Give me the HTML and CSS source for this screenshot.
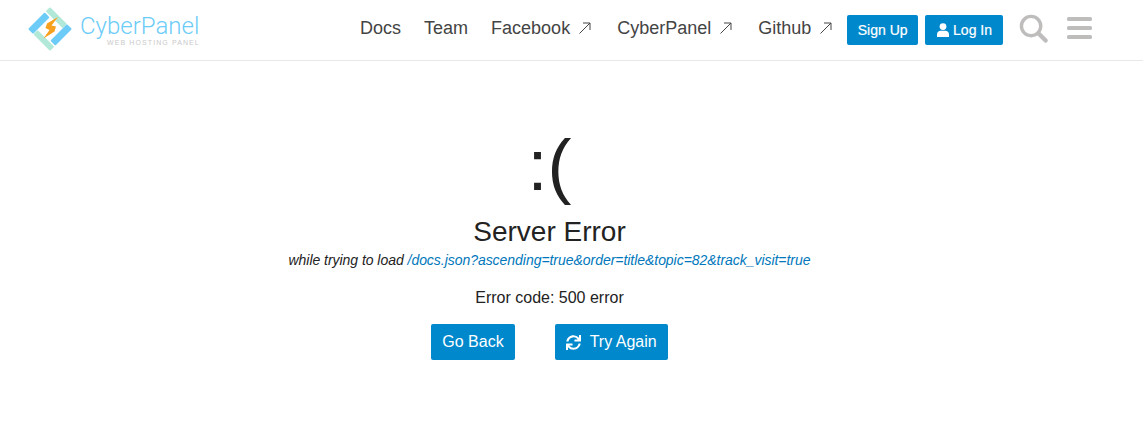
FILE: index.html
```html
<!DOCTYPE html>
<html lang="en">
<head>
<meta charset="utf-8">
<title>Server Error</title>
<link rel="stylesheet" href="styles.css">
</head>
<body>
<header class="site-header">
  <a class="brand" href="#">
    <svg class="brand-mark" width="44" height="44" viewBox="-22 -22 44 44" aria-hidden="true">
      <g transform="rotate(45)">
        <rect x="-15.500" y="-15.500" width="24" height="6" rx="1" fill="#b2e8d8"/>
        <rect x="-8" y="9.500" width="23.500" height="6" rx="1" fill="#b2e8d8"/>
        <rect x="-15.500" y="-8" width="7" height="23.500" rx="1" fill="#6cccf7"/>
        <rect x="8.500" y="-15.500" width="7" height="23.500" rx="1" fill="#6cccf7"/>
      </g>
      <path d="M8 -12 L-3 -5.500 L-4.500 -1 L-0.500 1 L-6.500 9.500 L4.500 2.500 L6 -2.500 L1.500 -3.500 Z" fill="#f7a01d"/>
    </svg>
    <span class="brand-text">
      <span class="brand-name">CyberPanel</span>
      <span class="brand-tag">WEB HOSTING PANEL</span>
    </span>
  </a>
  <nav class="nav">
    <a class="nav-link" href="#">Docs</a>
    <a class="nav-link" href="#">Team</a>
    <a class="nav-link" href="#">Facebook<svg class="arrow" width="12" height="12" viewBox="0 0 12 12" aria-hidden="true"><path d="M0.500 11.500 L11 1 M4 1 H11 V8" fill="none" stroke="#444" stroke-width="1"/></svg></a>
    <a class="nav-link" href="#">CyberPanel<svg class="arrow" width="12" height="12" viewBox="0 0 12 12" aria-hidden="true"><path d="M0.500 11.500 L11 1 M4 1 H11 V8" fill="none" stroke="#444" stroke-width="1"/></svg></a>
    <a class="nav-link" href="#">Github<svg class="arrow" width="12" height="12" viewBox="0 0 12 12" aria-hidden="true"><path d="M0.500 11.500 L11 1 M4 1 H11 V8" fill="none" stroke="#444" stroke-width="1"/></svg></a>
  </nav>
  <div class="actions">
    <a class="btn btn-small" href="#">Sign Up</a>
    <a class="btn btn-small btn-login" href="#">
      <svg class="user-icon" width="12" height="14" viewBox="0 0 12 14" aria-hidden="true"><circle cx="6" cy="3.600" r="3.400" fill="#fff"/><path d="M0 14 V11.500 C0 9 1.800 7.800 3.500 7.800 H8.500 C10.200 7.800 12 9 12 11.500 V14 Z" fill="#fff"/></svg>
      Log In
    </a>
  </div>
  <div class="tools">
    <svg width="29" height="29" viewBox="0 0 30 30" aria-hidden="true"><circle cx="12.500" cy="12.500" r="10" fill="none" stroke="#bfbcbc" stroke-width="3.500"/><path d="M20 20 L27.500 27.500" stroke="#bfbcbc" stroke-width="4.500" stroke-linecap="round"/></svg>
    <svg width="25" height="22" viewBox="0 0 25 22" aria-hidden="true"><g fill="#bfbcbc"><rect width="25" height="4" rx="1.500"/><rect y="9" width="25" height="4" rx="1.500"/><rect y="18" width="25" height="4" rx="1.500"/></g></svg>
  </div>
</header>
<main class="wrap">
  <div class="face">:(</div>
  <h1 class="title">Server Error</h1>
  <p class="detail"><em>while trying to load <a href="#">/docs.json?ascending=true&amp;order=title&amp;topic=82&amp;track_visit=true</a></em></p>
  <p class="code">Error code: 500 error</p>
  <div class="buttons">
    <a class="btn btn-large" href="#">Go Back</a>
    <a class="btn btn-large" href="#">
      <svg width="15" height="15" viewBox="0 0 512 512" aria-hidden="true"><path fill="#fff" d="M440.650 12.570l4 82.770A247.160 247.160 0 0 0 255.830 8C134.730 8 33.910 94.920 12.290 209.820A12 12 0 0 0 24.090 224h49.050a12 12 0 0 0 11.670-9.260 175.910 175.910 0 0 1 317-56.940l-101.460-4.860a12 12 0 0 0-12.570 12v47.410a12 12 0 0 0 12 12H500a12 12 0 0 0 12-12V12a12 12 0 0 0-12-12h-47.370a12 12 0 0 0-11.980 12.570zM255.830 432a175.610 175.610 0 0 1-146-77.800l101.800 4.870a12 12 0 0 0 12.570-12v-47.400a12 12 0 0 0-12-12H12a12 12 0 0 0-12 12V500a12 12 0 0 0 12 12h47.350a12 12 0 0 0 12-12.600l-4.150-82.570A247.170 247.170 0 0 0 255.830 504c121.110 0 221.930-86.920 243.550-201.820a12 12 0 0 0-11.800-14.180h-49.050a12 12 0 0 0-11.670 9.260A175.860 175.860 0 0 1 255.830 432z"/></svg>
      Try Again
    </a>
  </div>
</main>
</body>
</html>
```
FILE: styles.css
```css
* { box-sizing: border-box; }
html, body { margin: 0; padding: 0; }
body {
  background: #fff;
  color: #222;
  font-family: "Liberation Sans", Arial, sans-serif;
  font-size: 14px;
}
a { text-decoration: none; }

.site-header {
  display: flex;
  align-items: center;
  height: 61px;
  padding-left: 28px;
  border-bottom: 1px solid #e9e9e9;
}
.brand { display: flex; align-items: center; gap: 8px; margin-right: auto; }
.brand-mark { display: block; margin-bottom: 2px; }
.brand-text { display: flex; flex-direction: column; width: 130px; }
.brand-name {
  color: #6cccf7;
  font-family: Roboto, sans-serif;
  font-weight: 300;
  font-size: 24px;
  line-height: 26px;
}
.brand-tag {
  color: #c9c9c9;
  font-size: 7px;
  line-height: 8px;
  letter-spacing: 1.100px;
  margin-left: 27px;
}
.nav { display: flex; gap: 23px; margin: 0 12px 4px 0; }
.nav-link { display: flex; align-items: center; color: #444; font-size: 18px; line-height: 24px; }
.arrow { margin-left: 9px; margin-right: 3px; }
.actions { display: flex; gap: 7px; }
.btn {
  display: inline-flex;
  align-items: center;
  justify-content: center;
  background: #0088cc;
  color: #fff;
  border-radius: 2px;
}
.btn-small { height: 30px; padding: 0 10.500px; font-size: 14px; -webkit-text-stroke: 0.200px #fff; }
.btn-login { padding: 0 11px 0 12px; }
.user-icon { margin-right: 4px; }
.tools { display: flex; align-items: center; gap: 19px; margin: 0 51px 4px 16px; }
.tools svg { display: block; }

.wrap { width: 1099px; text-align: center; padding-top: 68px; }
.face { font-size: 72px; line-height: 72px; color: #222; height: 72px; }
.title { margin: 13px 0 0; font-size: 28px; line-height: 36px; font-weight: 400; }
.detail { margin: 0; font-size: 14px; line-height: 20px; letter-spacing: -0.040px; color: #222; }
.detail a { color: #0077bb; }
.code { margin: 17px 0 0; font-size: 16px; line-height: 22px; color: #222; }
.buttons { display: flex; justify-content: center; gap: 40px; margin-top: 15px; }
.btn-large { height: 36px; padding: 0 11px; font-size: 16px; gap: 9px; }
```
